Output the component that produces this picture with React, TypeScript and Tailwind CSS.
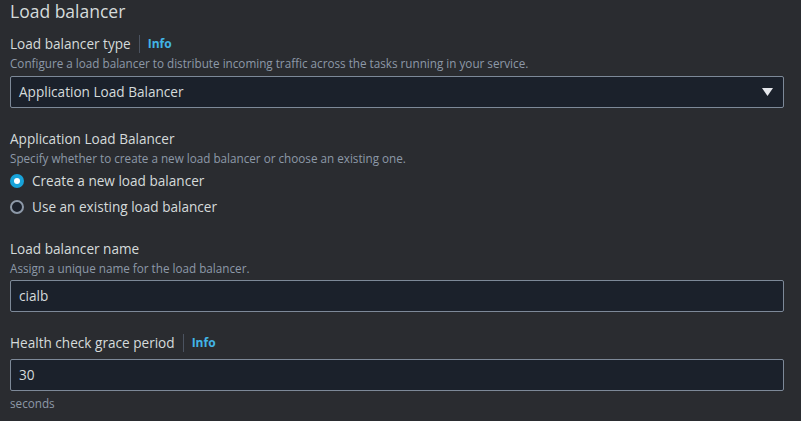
import React from "react";

const Info = () => (
  <span className="flex items-center">
    <span className="mx-[8px] h-[18px] w-px bg-[#4b5360]" />
    <span className="text-[12px] font-bold text-[#42b4e6]">Info</span>
  </span>
);

const Radio = ({ checked, label }: { checked?: boolean; label: string }) => (
  <label className="flex items-center gap-[8px] h-[26px]">
    {checked ? (
      <span className="w-[14px] h-[14px] rounded-full bg-[#18a3d9] flex items-center justify-center">
        <span className="w-[6px] h-[6px] rounded-full bg-white" />
      </span>
    ) : (
      <span className="w-[14px] h-[14px] rounded-full border-2 border-[#8d99a8] bg-[#1b212b]" />
    )}
    <span className="text-[13.6px] text-[#d5dbdb]">{label}</span>
  </label>
);

export default function App() {
  return (
    <div
      className="w-[801px] h-[421px] bg-[#2a2c30] px-[10px] pt-0 text-[#d5dbdb] overflow-hidden"
      style={{ fontFamily: '"Open Sans", "Noto Sans", sans-serif' }}
    >
      <h2 className="text-[17.5px] leading-[22px] mb-[12px]">Load balancer</h2>

      <div className="w-[774px]">
        <div className="flex items-center h-[20px] text-[13.6px]">
          <span>Load balancer type</span>
          <Info />
        </div>
        <p className="text-[11.7px] leading-[18px] text-[#8d99a8]">
          Configure a load balancer to distribute incoming traffic across the tasks running in your service.
        </p>
        <div className="mt-[4px] h-[32px] rounded-[2px] border border-[#7d8998] bg-[#1b212b] flex items-center justify-between px-[8px] text-[13.6px]">
          <span>Application Load Balancer</span>
          <svg width="11" height="8" viewBox="0 0 11 8" className="mr-[2px]">
            <path d="M0 0h11L5.5 8z" fill="#e5e7eb" />
          </svg>
        </div>

        <div className="mt-[21px] text-[13.6px] leading-[20px]">Application Load Balancer</div>
        <p className="text-[11.7px] leading-[18px] text-[#8d99a8]">
          Specify whether to create a new load balancer or choose an existing one.
        </p>
        <div className="mt-[1px] flex flex-col">
          <Radio checked label="Create a new load balancer" />
          <Radio label="Use an existing load balancer" />
        </div>

        <div className="mt-[19px] text-[13.6px] leading-[20px]">Load balancer name</div>
        <p className="text-[11.7px] leading-[18px] text-[#8d99a8]">Assign a unique name for the load balancer.</p>
        <div className="mt-[3px] h-[32px] rounded-[2px] border border-[#7d8998] bg-[#1b212b] flex items-center px-[8px] text-[13.6px]">
          cialb
        </div>

        <div className="mt-[21px] flex items-center h-[20px] text-[13.6px]">
          <span>Health check grace period</span>
          <Info />
        </div>
        <div className="mt-[6px] h-[32px] rounded-[2px] border border-[#7d8998] bg-[#1b212b] flex items-center px-[8px] text-[13.6px]">
          30
        </div>
        <p className="mt-[3px] text-[11.7px] leading-[18px] text-[#8d99a8]">seconds</p>
      </div>
    </div>
  );
}
